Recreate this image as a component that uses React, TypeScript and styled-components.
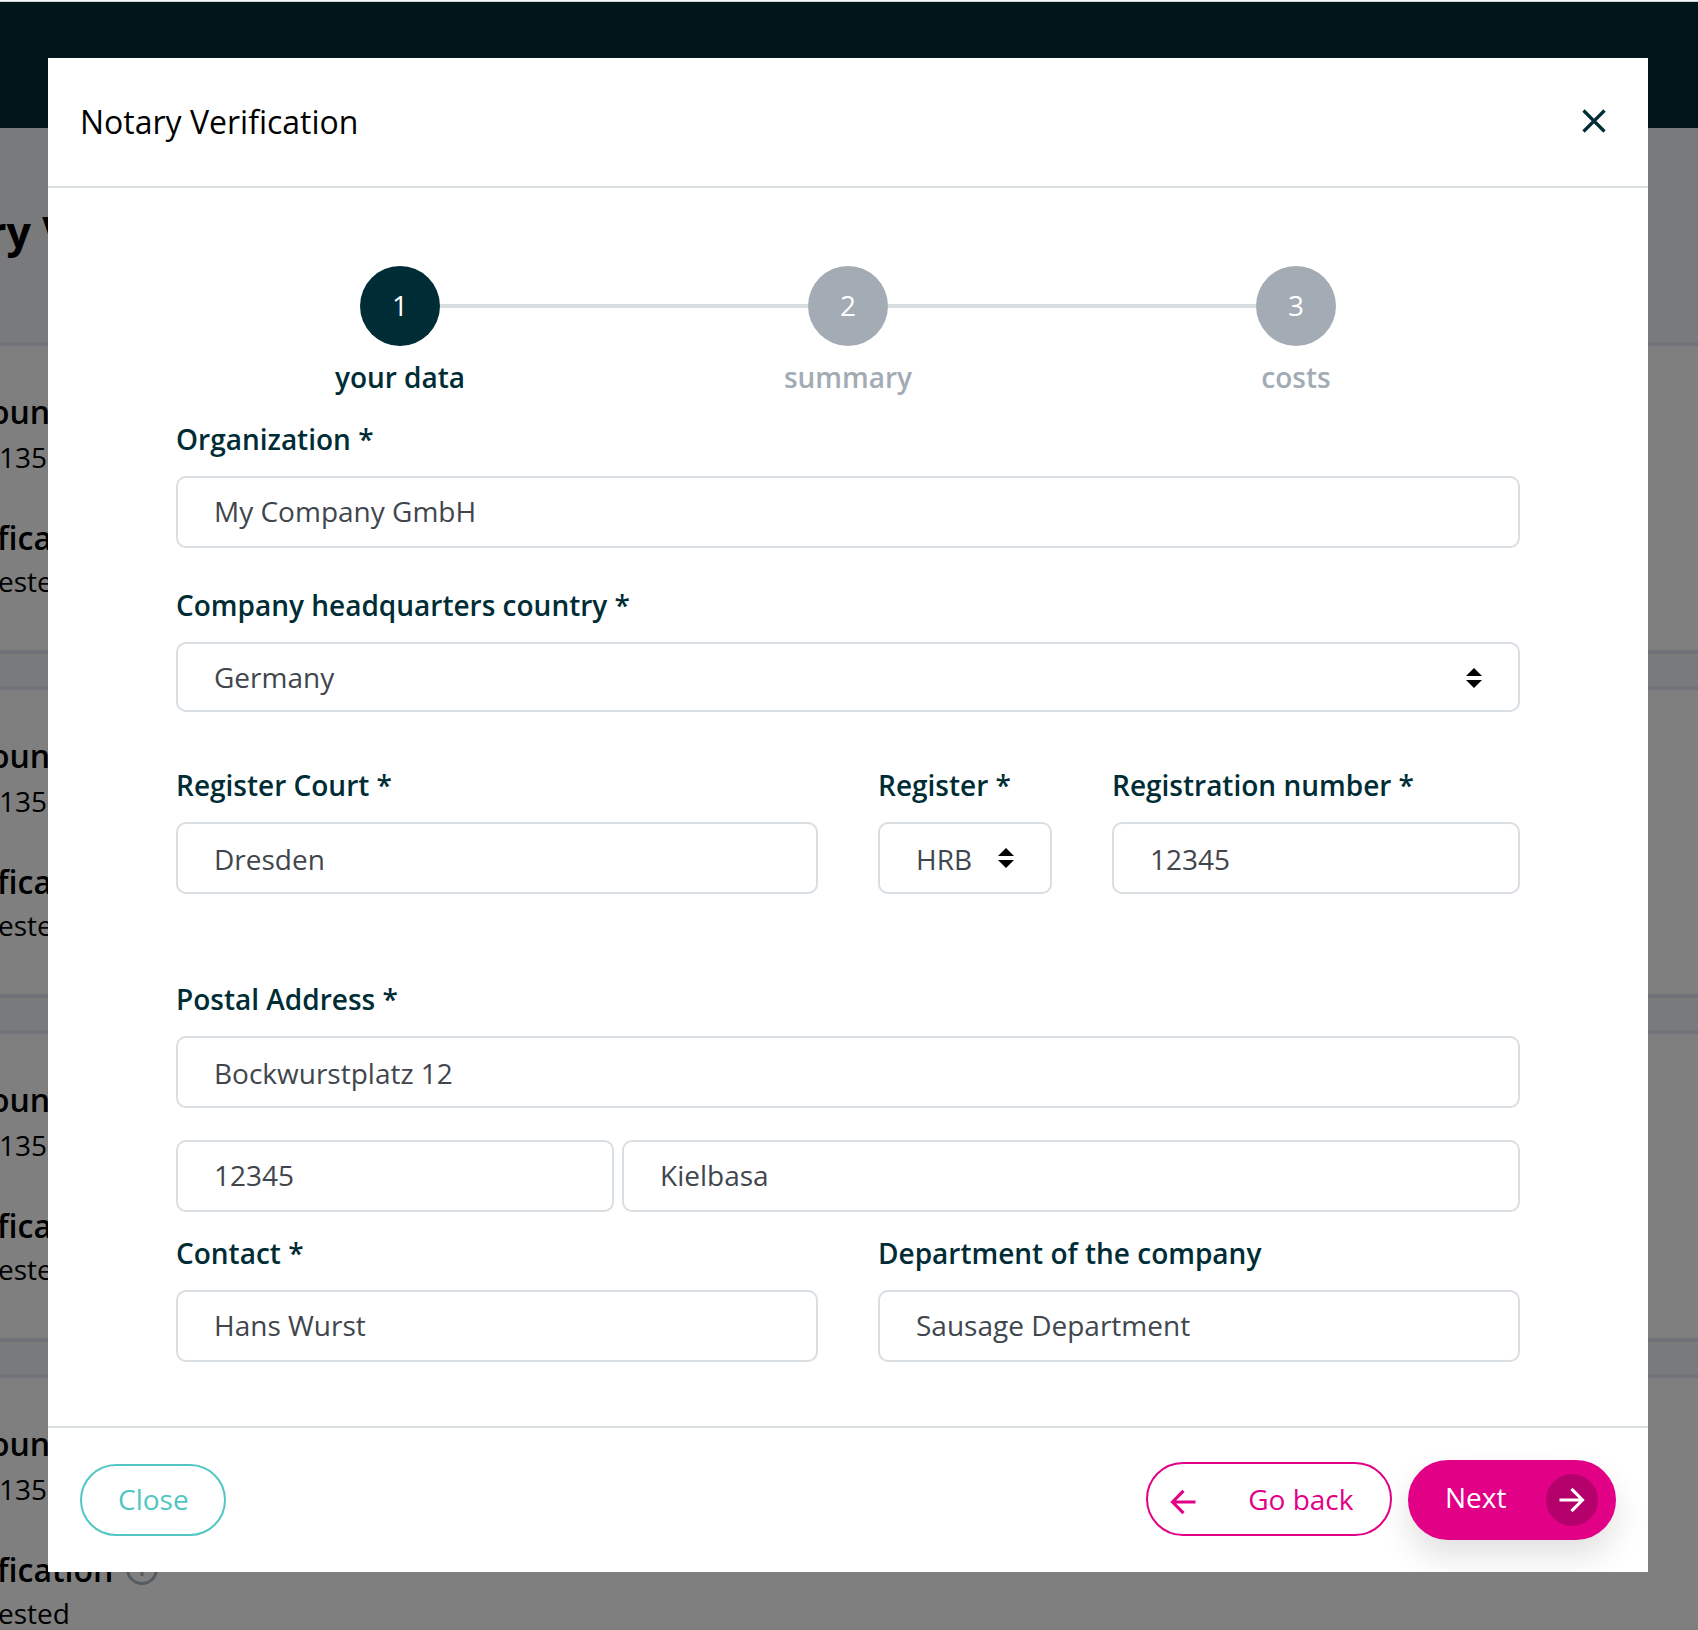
import React from "react";
import styled, { createGlobalStyle } from "styled-components";

const ink = "#002d35";
const muted = "#a3abb5";
const pink = "#e20087";
const teal = "#51c6c3";
const rule = "#d9dedf";

const GlobalStyle = createGlobalStyle`
  *, *::before, *::after { box-sizing: border-box; }
  html, body { margin: 0; padding: 0; overflow: hidden; }
  body, input, button { font-family: "Open Sans", "Noto Sans", sans-serif; }
  body { font-size: 28px; line-height: 40px; background: #fff; }
`;

const Screen = styled.div`
  display: flex;
  flex-direction: column;
  width: 1698px;
  height: 1630px;
  overflow: hidden;
`;

const TopEdge = styled.div`
  height: 2px;
  flex: none;
  background: #f3f6f6;
  border-bottom: 1px solid #ccd5d7;
`;

const Stage = styled.div`
  display: grid;
  grid-template: 1628px / 1698px;
  > * { grid-area: 1 / 1; }
`;

const Page = styled.div`
  display: flex;
  flex-direction: column;
  overflow: hidden;
  background: #f2f4f8;
  color: #000;
`;

const NavBar = styled.div`
  height: 126px;
  flex: none;
  background: ${ink};
`;

const PageHeading = styled.h1`
  margin: 0;
  height: 214px;
  flex: none;
  padding-top: 74px;
  text-indent: -13px;
  font-size: 43px;
  line-height: 60px;
  font-weight: 700;
  white-space: nowrap;
`;

const RequestCard = styled.section`
  height: 312px;
  flex: none;
  margin-bottom: 32px;
  padding-top: 44px;
  border: solid #e4e7f0;
  border-width: 4px 0;
  background: #fff;
  white-space: nowrap;
`;

const CardTerm = styled.div<{ $indent: number }>`
  display: flex;
  align-items: center;
  gap: 13px;
  height: 44px;
  margin-left: ${(p) => p.$indent}px;
  font-size: 32px;
  line-height: 44px;
  font-weight: 600;
`;

const CardValue = styled.div<{ $indent: number; $top: number; $after?: number }>`
  margin: ${(p) => p.$top}px 0 ${(p) => p.$after ?? 0}px ${(p) => p.$indent}px;
  line-height: 40px;
`;

const Backdrop = styled.div`
  display: flex;
  align-items: flex-start;
  padding: 56px 50px 0 48px;
  background: rgba(0, 0, 0, 0.5);
  z-index: 1;
`;

const Dialog = styled.div`
  width: 1600px;
  height: 1514px;
  display: flex;
  flex-direction: column;
  overflow: hidden;
  background: #fff;
`;

const DialogHeader = styled.header`
  height: 130px;
  flex: none;
  display: flex;
  align-items: center;
  justify-content: space-between;
  padding: 0 40px 0 32px;
  border-bottom: 2px solid ${rule};
`;

const DialogTitle = styled.h2`
  margin: 0;
  font-size: 32px;
  line-height: 48px;
  font-weight: 400;
  color: #000;
`;

const IconButton = styled.button`
  display: flex;
  width: 28px;
  height: 28px;
  margin-bottom: 2px;
  padding: 0;
  border: 0;
  background: none;
  color: ${ink};
`;

const DialogBody = styled.div`
  flex: 1;
  display: flex;
  flex-direction: column;
  padding: 78px 128px 0;
`;

const Stepper = styled.div`
  display: flex;
  align-items: flex-start;
  height: 131px;
  margin: 0 184px 22px;
`;

const Step = styled.div<{ $active?: boolean }>`
  width: 80px;
  display: flex;
  flex-direction: column;
  align-items: center;
  gap: 11px;
  font-weight: 600;
  white-space: nowrap;
  color: ${(p) => (p.$active ? ink : muted)};
`;

const StepDot = styled.span<{ $active?: boolean }>`
  width: 80px;
  height: 80px;
  flex: none;
  display: flex;
  align-items: center;
  justify-content: center;
  padding-bottom: 2px;
  border-radius: 50%;
  font-weight: 400;
  color: #fff;
  background: ${(p) => (p.$active ? ink : muted)};
`;

const StepLine = styled.span`
  flex: 1;
  height: 4px;
  margin-top: 38px;
  background: #d7dedf;
`;

const FieldRow = styled.div<{ $columns?: string; $gap?: number; $top?: number }>`
  display: grid;
  grid-template-columns: ${(p) => p.$columns ?? "1fr"};
  column-gap: ${(p) => p.$gap ?? 60}px;
  margin-top: ${(p) => p.$top ?? 0}px;
`;

const Field = styled.label`
  display: flex;
  flex-direction: column;
  gap: 17px;
  min-width: 0;
  font-weight: 600;
  color: ${ink};
`;

const TextInput = styled.input<{ $low?: boolean }>`
  width: 100%;
  min-width: 0;
  height: 72px;
  padding: ${(p) => (p.$low ? "2px 36px 0" : "0 36px 2px")};
  border: 2px solid #d9dee3;
  border-radius: 10px;
  background: #fff;
  font-size: 28px;
  line-height: 40px;
  color: #41464d;
  outline: none;
`;

const SelectBox = styled.button<{ $low?: boolean }>`
  display: flex;
  align-items: center;
  justify-content: space-between;
  width: 100%;
  height: ${(p) => (p.$low ? 72 : 70)}px;
  padding: 0 36px;
  border: 2px solid #d9dee3;
  border-radius: 10px;
  background: #fff;
  font-size: 28px;
  line-height: 40px;
  color: #41464d;
  text-align: left;
`;

const SelectValue = styled.span<{ $low?: boolean }>`
  padding-top: ${(p) => (p.$low ? 2 : 0)}px;
`;

const SelectIcon = styled.span<{ $low?: boolean }>`
  display: flex;
  padding-top: ${(p) => (p.$low ? 0 : 2)}px;
`;

const DialogFooter = styled.footer`
  height: 146px;
  flex: none;
  display: flex;
  align-items: center;
  gap: 16px;
  padding: 0 32px;
  border-top: 2px solid ${rule};
`;

const PillButton = styled.button<{ $color: string; $width: number; $height: number }>`
  display: flex;
  align-items: center;
  justify-content: space-between;
  width: ${(p) => p.$width}px;
  height: ${(p) => p.$height}px;
  padding: 0 36px 2px;
  border: 2px solid ${(p) => p.$color};
  border-radius: 40px;
  background: #fff;
  font-size: 28px;
  line-height: 40px;
  color: ${(p) => p.$color};
`;

const BackButton = styled(PillButton)`
  margin-left: auto;
  margin-bottom: 2px;
  padding: 0 36.5px 0 22px;
`;

const NextButton = styled(PillButton)`
  padding: 0 16px 0 35px;
  background: ${pink};
  color: #fff;
  box-shadow: 0 16px 32px rgba(0, 0, 0, 0.12);
`;

const NextText = styled.span`
  padding-bottom: 6px;
`;

const ArrowBadge = styled.span`
  width: 52px;
  height: 52px;
  display: flex;
  align-items: center;
  justify-content: center;
  border-radius: 50%;
  background: #b3006b;
`;

const BackIcon = styled.span`
  display: flex;
  padding-top: 6px;
`;

const CloseIcon = () => (
  <svg width="28" height="28" viewBox="0 0 28 28" fill="none" stroke="currentColor" strokeWidth="3.2">
    <path d="M3.5 3.5 24.5 24.5M24.5 3.5 3.5 24.5" />
  </svg>
);

const ArrowRight = () => (
  <svg width="26" height="26" viewBox="0 0 26 26" fill="none" stroke="currentColor" strokeWidth="3.1">
    <path d="M0.5 13H24M12.5 1.8 23.5 13 12.5 24.2" />
  </svg>
);

const ArrowLeft = () => (
  <svg width="26" height="26" viewBox="0 0 26 26" fill="none" stroke="currentColor" strokeWidth="3.1">
    <path d="M25.5 13H2M13.5 1.8 2.5 13 13.5 24.2" />
  </svg>
);

const SortIcon = () => (
  <svg width="16" height="20" viewBox="0 0 16 20" fill="#000">
    <path d="M0 8 8 0 16 8ZM0 12H16L8 20Z" />
  </svg>
);

const InfoIcon = () => (
  <svg width="32" height="32" viewBox="0 0 32 32" fill="none" stroke="#a9b6c3" strokeWidth="3">
    <circle cx="16" cy="15" r="14.5" />
    <path d="M16 13v9M16 7.5v3" />
  </svg>
);

const cards = [0, 1, 2, 3];

export default function App() {
  return (
    <Screen>
      <GlobalStyle />
      <TopEdge />
      <Stage>
        <Page>
          <NavBar />
          <PageHeading>ry V</PageHeading>
          {cards.map((card) => (
            <RequestCard key={card}>
              <CardTerm $indent={-10}>oun</CardTerm>
              <CardValue $top={3} $after={39} $indent={-1}>135</CardValue>
              <CardTerm $indent={-3}>
                fication
                <InfoIcon />
              </CardTerm>
              <CardValue $top={1} $indent={-2}>ested</CardValue>
            </RequestCard>
          ))}
        </Page>
        <Backdrop>
          <Dialog role="dialog">
            <DialogHeader>
              <DialogTitle>Notary Verification</DialogTitle>
              <IconButton>
                <CloseIcon />
              </IconButton>
            </DialogHeader>
            <DialogBody>
              <Stepper>
                <Step $active>
                  <StepDot $active>1</StepDot>
                  your data
                </Step>
                <StepLine />
                <Step>
                  <StepDot>2</StepDot>
                  summary
                </Step>
                <StepLine />
                <Step>
                  <StepDot>3</StepDot>
                  costs
                </Step>
              </Stepper>
              <FieldRow>
                <Field>
                  Organization *
                  <TextInput defaultValue="My Company GmbH" />
                </Field>
              </FieldRow>
              <FieldRow $top={37}>
                <Field as="div">
                  Company headquarters country *
                  <SelectBox>
                    <SelectValue>Germany</SelectValue>
                    <SelectIcon>
                      <SortIcon />
                    </SelectIcon>
                  </SelectBox>
                </Field>
              </FieldRow>
              <FieldRow $top={53} $columns="642px 174px 1fr">
                <Field>
                  Register Court *
                  <TextInput $low defaultValue="Dresden" />
                </Field>
                <Field as="div">
                  Register *
                  <SelectBox $low>
                    <SelectValue $low>HRB</SelectValue>
                    <SelectIcon $low>
                      <SortIcon />
                    </SelectIcon>
                  </SelectBox>
                </Field>
                <Field>
                  Registration number *
                  <TextInput $low defaultValue="12345" />
                </Field>
              </FieldRow>
              <FieldRow $top={85}>
                <Field>
                  Postal Address *
                  <TextInput $low defaultValue="Bockwurstplatz 12" />
                </Field>
              </FieldRow>
              <FieldRow $top={32} $columns="438px 1fr" $gap={8}>
                <TextInput defaultValue="12345" />
                <TextInput defaultValue="Kielbasa" />
              </FieldRow>
              <FieldRow $top={21} $columns="1fr 1fr">
                <Field>
                  Contact *
                  <TextInput defaultValue="Hans Wurst" />
                </Field>
                <Field>
                  Department of the company
                  <TextInput defaultValue="Sausage Department" />
                </Field>
              </FieldRow>
            </DialogBody>
            <DialogFooter>
              <PillButton $color={teal} $width={146} $height={72}>
                Close
              </PillButton>
              <BackButton $color={pink} $width={246} $height={74}>
                <BackIcon>
                  <ArrowLeft />
                </BackIcon>
                Go back
              </BackButton>
              <NextButton $color={pink} $width={208} $height={80}>
                <NextText>Next</NextText>
                <ArrowBadge>
                  <ArrowRight />
                </ArrowBadge>
              </NextButton>
            </DialogFooter>
          </Dialog>
        </Backdrop>
      </Stage>
    </Screen>
  );
}
